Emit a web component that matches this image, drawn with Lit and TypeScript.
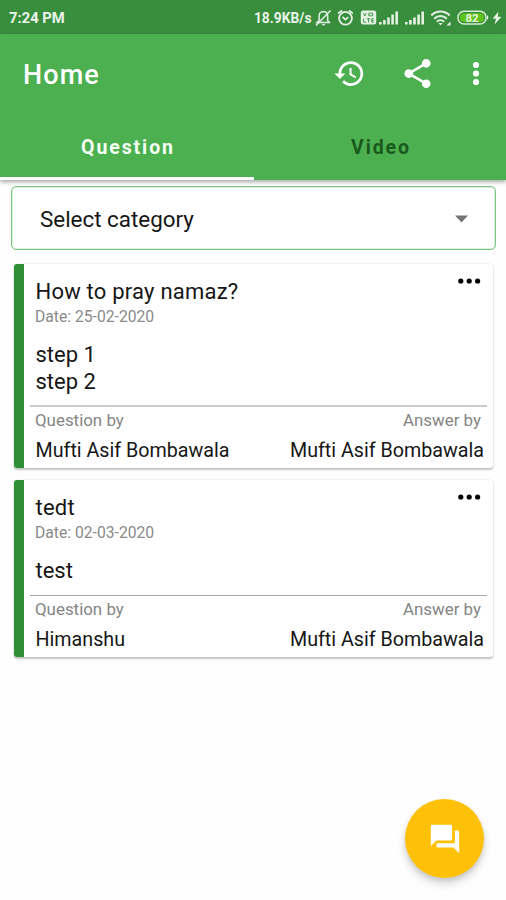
import { LitElement, html, css, svg } from "lit";
import { customElement, property } from "lit/decorators.js";

interface Entry {
  title: string;
  date: string;
  lines: string[];
  asker: string;
  answerer: string;
}

const ENTRIES: Entry[] = [
  { title: "How to pray namaz?", date: "25-02-2020", lines: ["step 1", "step 2"], asker: "Mufti Asif Bombawala", answerer: "Mufti Asif Bombawala" },
  { title: "tedt", date: "02-03-2020", lines: ["test"], asker: "Himanshu", answerer: "Mufti Asif Bombawala" },
];

@customElement("question-card")
class QuestionCard extends LitElement {
  @property({ attribute: false }) entry!: Entry;

  static styles = css`
    :host { display: block; }
    .card {
      display: flex; border-radius: 3px; background: #fff;
      box-shadow: 0 1.5px 2px rgba(0, 0, 0, 0.22), 0 0 2px rgba(0, 0, 0, 0.1);
    }
    .stripe { width: 10px; background: #2e8f36; border-radius: 3px 0 0 3px; flex: none; }
    .body { flex: 1; padding: 14px 6px 4px; }
    .head { display: flex; justify-content: space-between; padding: 0 6px 0 5.5px; }
    .title { font-size: 22px; line-height: 28px; letter-spacing: 0.22px; color: #161616; }
    .more { width: 23px; height: 6px; }
    .date { font-size: 15.7px; line-height: 20px; margin-top: 1px; padding-left: 5px; color: #8a8a8a; }
    .answer { margin-top: 14px; padding-left: 5.5px; font-size: 22px; line-height: 27px; color: #161616; }
    .rule { margin-top: 10px; height: 2px; background: #cbcbcb; }
    .rule.thin { margin-top: 11px; height: 1px; background: #a8a8a8; }
    .row { display: flex; justify-content: space-between; }
    .labels { margin-top: 3px; padding: 0 6px 0 5px; font-size: 16.9px; line-height: 20px; color: #858585; }
    .names { margin-top: 8px; padding: 0 3px 0 5.5px; font-size: 19.7px; line-height: 26px; color: #161616; }
  `;

  render() {
    const e = this.entry;
    return html`
      <div class="card">
        <div class="stripe"></div>
        <div class="body">
          <div class="head">
            <div class="title">${e.title}</div>
            <svg class="more" viewBox="0 0 23 6">
              <circle cx="2.8" cy="3" r="2.6" /><circle cx="11.2" cy="3" r="2.6" /><circle cx="19.6" cy="3" r="2.6" />
            </svg>
          </div>
          <div class="date">Date: ${e.date}</div>
          <div class="answer">${e.lines.map((l) => html`<div>${l}</div>`)}</div>
          <div class="rule ${e.lines.length === 1 ? "thin" : ""}"></div>
          <div class="row labels"><span>Question by</span><span>Answer by</span></div>
          <div class="row names"><span>${e.asker}</span><span>${e.answerer}</span></div>
        </div>
      </div>
    `;
  }
}

const signal = () => svg`
  <path d="M0 16.500v-2.500h2.600v2.500zM4.100 16.500v-4.500h2.600v4.500zM8.200 16.500v-7h2.600v7zM12.300 16.500v-10h2.600v10zM16.400 16.500v-13h2.600v13z" />
`;

@customElement("app-root")
class AppRoot extends LitElement {
  static styles = css`
    :host {
      display: flex; flex-direction: column; position: relative; height: 900px;
      overflow: hidden; background: #fefefe; font-family: Roboto, "Noto Sans", sans-serif;
    }
    .status {
      height: 34px; flex: none; background: #398e3d; color: #e9f5e9; display: flex; align-items: center;
      justify-content: space-between; padding: 1px 4px 0 9px; box-sizing: border-box;
      font-size: 14.8px; font-weight: 700;
    }
    .rate { font-size: 13.8px; margin-right: 1.5px; }
    .tray { display: flex; align-items: center; }
    .tray svg { display: block; flex: none; fill: #e3f2e3; }
    .bar { height: 146px; flex: none; background: #4caf50; color: #fff; box-shadow: 0 2px 4px rgba(0, 0, 0, 0.34); }
    .tools { height: 80px; box-sizing: border-box; display: flex; align-items: center; padding: 0 26px 2px 23px; }
    .heading { flex: 1; font-size: 27px; font-weight: 500; letter-spacing: 1.1px; padding-top: 4px; }
    .tools svg { display: block; fill: #fff; }
    .history { margin-right: 34px; }
    .share { margin-right: 37px; }
    .tabs { display: grid; grid-template-columns: 254px 1fr; height: 66px; }
    .tab {
      display: flex; align-items: center; justify-content: center; font-size: 19.5px; font-weight: 700;
      letter-spacing: 1.9px; color: #185a1b; border-bottom: 3px solid transparent; padding: 4px 0 0 2px; box-sizing: border-box;
    }
    .tab.on { color: #f4fff4; border-color: #fff; }
    .select {
      margin: 6px 10px 0 11px; height: 64px; box-sizing: border-box; border: 1px solid #7cc685; border-radius: 5px;
      display: flex; align-items: center; justify-content: space-between; padding: 2px 27px 0 28px;
      background: #fff; font-size: 22.4px; color: #161616; z-index: 1;
      box-shadow: inset 0 0 0 1px #dceedd;
    }
    .cards { display: flex; flex-direction: column; gap: 12px; margin: 14px 13px 0 14px; }
    .fab {
      position: absolute; left: 405px; top: 799px; width: 79px; height: 79px; border-radius: 50%;
      background: #ffc107; display: flex; align-items: center; justify-content: center;
      box-shadow: 0 6px 10px rgba(0, 0, 0, 0.14), 0 3px 5px rgba(0, 0, 0, 0.1);
    }
    .fab svg { fill: #fff; }
  `;

  render() {
    return html`
      <div class="status">
        <span class="clock">7:24 PM</span>
        <div class="tray">
          <span class="rate">18.9KB/s</span>
          <svg width="21" height="20" viewBox="-0.5 0 21 20">
            <path d="M3.5 14.5h12.3l-1.6-2V8.2c0-2.6-1.6-4.4-4.2-4.6-2.7.2-4.4 2-4.4 4.6v4.3z" fill="none" stroke="#e3f2e3" stroke-width="1.5" />
            <path d="M8 16h4l-2 1.8z" /><path d="M2.5 17.5L17 2.5" stroke="#e3f2e3" stroke-width="1.5" />
          </svg>
          <svg width="23" height="20" viewBox="1.5 0 23 20">
            <circle cx="13" cy="10.3" r="6.4" fill="none" stroke="#e3f2e3" stroke-width="1.8" />
            <path d="M5.6 5.5l4-3M20.4 5.5l-4-3M10 9l3 2.6 2.8-2.6" fill="none" stroke="#e3f2e3" stroke-width="1.7" />
          </svg>
          <svg width="20" height="20" viewBox="0 0 20 20">
            <rect x="3.8" y="2.5" width="15.4" height="14" rx="2.5" />
            <path d="M6.300 5l1.500 3 1.500-3M11.800 5.200h3.800v2.600h-3.800zM6.600 10.500v3.700h2.500M9.800 10.800h3.400M11.500 10.800v3.600M16.800 10.800h-2v3.400h2M14.800 12.400h2" fill="none" stroke="#398e3d" stroke-width="0.900" />
          </svg>
          <svg width="26" height="20" viewBox="-2 0 26 20">${signal()}</svg>
          <svg width="26" height="20" viewBox="-2 0 26 20">${signal()}</svg>
          <svg width="26" height="20" viewBox="-1 0 26 20">
            <path d="M1.300 7.500C6.500 2.300 14.500 2.300 19.700 7.500M4.200 10.800C7.800 7.200 13.200 7.200 16.800 10.800M6.800 13.800c2.200-2.200 5.200-2.200 7.400 0" fill="none" stroke="#e3f2e3" stroke-width="2" />
            <path d="M8.500 15h4l-2 2.500zM16.500 17.500h4v-4z" />
          </svg>
          <svg width="36" height="20" viewBox="0 0 36 20">
            <rect x="3" y="3.200" width="28" height="12.800" rx="6" fill="none" stroke="#d5edd3" stroke-width="1.500" />
            <rect x="5" y="5.200" width="24" height="8.800" rx="4" fill="#5ec11c" />
            <path d="M32 7q2.600 2.600 0 5.200z" />
            <text x="17" y="13.700" text-anchor="middle" font-size="11.500" font-weight="700" fill="#e9f7df">82</text>
          </svg>
          <svg width="11" height="20" viewBox="0 0 11 20"><path d="M7.500 3.500L1.500 10.800h3.500L3.500 16.500l7-7.700H6.800z" /></svg>
        </div>
      </div>
      <div class="bar">
        <div class="tools">
          <div class="heading">Home</div>
          <svg class="history" width="33" height="33" viewBox="0 0 24 24">
            <path d="M13 3c-4.970 0-9 4.030-9 9H1l3.890 3.890.070.140L9 12H6c0-3.870 3.130-7 7-7s7 3.130 7 7-3.130 7-7 7c-1.930 0-3.680-.790-4.940-2.060l-1.420 1.420C8.270 19.990 10.510 21 13 21c4.970 0 9-4.030 9-9s-4.030-9-9-9zm-1 5v5l4.280 2.540.720-1.210-3.500-2.080V8H12z" />
          </svg>
          <svg class="share" width="35" height="35" viewBox="0 0 24 24">
            <path d="M18 16.080c-.760 0-1.440.300-1.960.770L8.910 12.700c.050-.230.090-.460.090-.700s-.040-.470-.090-.700l7.050-4.110c.540.500 1.250.810 2.040.810 1.660 0 3-1.340 3-3s-1.340-3-3-3-3 1.340-3 3c0 .240.040.470.090.700L8.040 9.810C7.500 9.310 6.790 9 6 9c-1.660 0-3 1.340-3 3s1.340 3 3 3c.790 0 1.500-.310 2.040-.810l7.120 4.160c-.050.210-.080.430-.080.650 0 1.610 1.310 2.920 2.920 2.920s2.920-1.310 2.920-2.920-1.310-2.920-2.920-2.920z" />
          </svg>
          <svg width="8" height="26" viewBox="0 0 8 26">
            <circle cx="4" cy="5" r="3.100" /><circle cx="4" cy="13.500" r="3.100" /><circle cx="4" cy="22" r="3.100" />
          </svg>
        </div>
        <div class="tabs">
          <div class="tab on">Question</div>
          <div class="tab">Video</div>
        </div>
      </div>
      <div class="select">
        <span>Select category</span>
        <svg width="13" height="8" viewBox="0 0 13 8"><path d="M0 .5h13L6.500 7.500z" fill="#737373" /></svg>
      </div>
      <div class="cards">${ENTRIES.map((e) => html`<question-card .entry=${e}></question-card>`)}</div>
      <div class="fab">
        <svg width="34" height="34" viewBox="0 0 24 24">
          <path d="M21 6h-2v9H6v2c0 .550.450 1 1 1h11l4 4V7c0-.550-.450-1-1-1zm-4 6V3c0-.550-.450-1-1-1H3c-.550 0-1 .450-1 1v14l4-4h10c.550 0 1-.450 1-1z" />
        </svg>
      </div>
    `;
  }
}
